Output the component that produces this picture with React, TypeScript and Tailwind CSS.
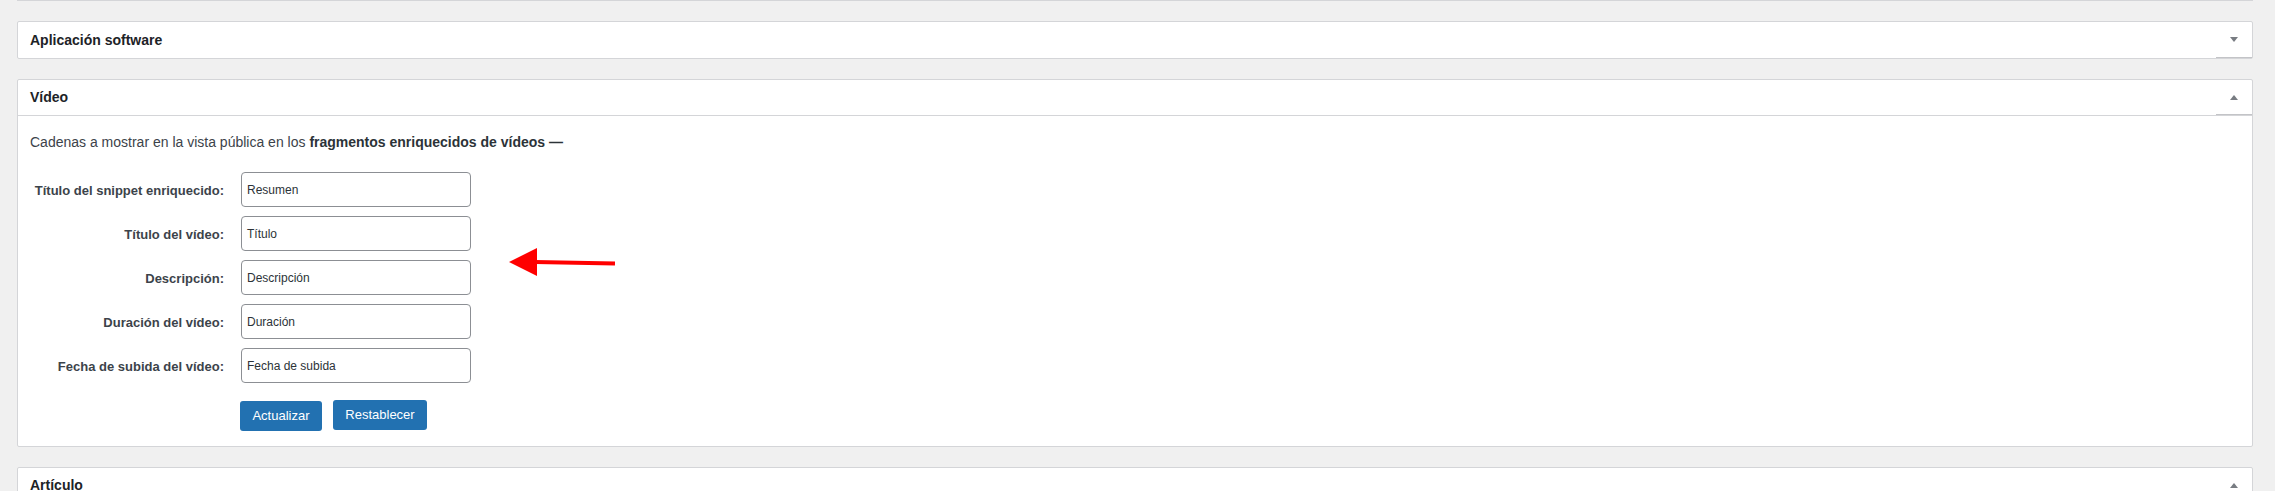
import React from 'react';

const fields = [
  { label: 'Título del snippet enriquecido:', value: 'Resumen' },
  { label: 'Título del vídeo:', value: 'Título' },
  { label: 'Descripción:', value: 'Descripción' },
  { label: 'Duración del vídeo:', value: 'Duración' },
  { label: 'Fecha de subida del vídeo:', value: 'Fecha de subida' },
];

function Toggle({ open }: { open: boolean }) {
  return (
    <div className="w-[36px] h-full flex items-center justify-center border-b border-[#c3c4c7]">
      <svg width="8" height="5" viewBox="0 0 8 5" className="text-[#787c82]">
        {open ? (
          <polygon points="0,5 4,0 8,5" fill="currentColor" />
        ) : (
          <polygon points="0,0 8,0 4,5" fill="currentColor" />
        )}
      </svg>
    </div>
  );
}

function Panel({ title, open, children }: { title: string; open: boolean; children?: React.ReactNode }) {
  return (
    <div className="bg-white border border-[#d4d5d8] rounded-[2px] mb-[20px]">
      <div className={`flex items-stretch h-[36px] ${open ? 'border-b border-[#d4d5d8]' : ''}`}>
        <h2 className="flex-1 flex items-center pl-[12px] text-[14px] font-bold text-[#1d2327]">{title}</h2>
        <Toggle open={open} />
      </div>
      {children}
    </div>
  );
}

export default function App() {
  return (
    <div className="relative h-screen overflow-hidden bg-[#f0f0f0] pl-[17px] pr-[22px] font-['Liberation_Sans',Arial,sans-serif]">
      {/* bottom edge of the box above */}
      <div className="border-b border-[#d4d5d8] mb-[20px]" />

      <Panel title="Aplicación software" open={false} />

      <Panel title="Vídeo" open>
        <div className="px-[12px] pt-[16px] pb-[15px]">
          <p className="text-[14px] leading-[20px] text-[#3c434a]">
            Cadenas a mostrar en la vista pública en los <strong className="font-bold text-[#2c3338]">fragmentos enriquecidos de vídeos —</strong>
          </p>

          <div className="mt-[20px] flex flex-col gap-[9px]">
            {fields.map((f) => (
              <div key={f.label} className="flex items-center">
                <label className="w-[194px] pt-[2px] text-right text-[13px] font-bold text-[#3c434a]">{f.label}</label>
                <div className="ml-[17px] w-[230px] h-[35px] flex items-center px-[5px] border border-[#8c8f94] rounded-[4px] text-[12px] text-[#2c3338]">
                  {f.value}
                </div>
              </div>
            ))}
          </div>

          <div className="mt-[17px] ml-[210px] flex items-start gap-[11px]">
            <button className="mt-[1px] h-[30px] w-[82px] rounded-[3px] bg-[#2271b1] text-[13px] text-white">Actualizar</button>
            <button className="h-[30px] w-[94px] rounded-[3px] bg-[#2271b1] text-[13px] text-white">Restablecer</button>
          </div>
        </div>
      </Panel>

      <Panel title="Artículo" open />

      {/* red annotation arrow */}
      <svg className="absolute left-[505px] top-[244px]" width="115" height="36" viewBox="0 0 115 36">
        <line x1="30" y1="18" x2="110" y2="19.5" stroke="#ff0000" strokeWidth="4" />
        <polygon points="4,18 32,4 32,32" fill="#ff0000" />
      </svg>
    </div>
  );
}
